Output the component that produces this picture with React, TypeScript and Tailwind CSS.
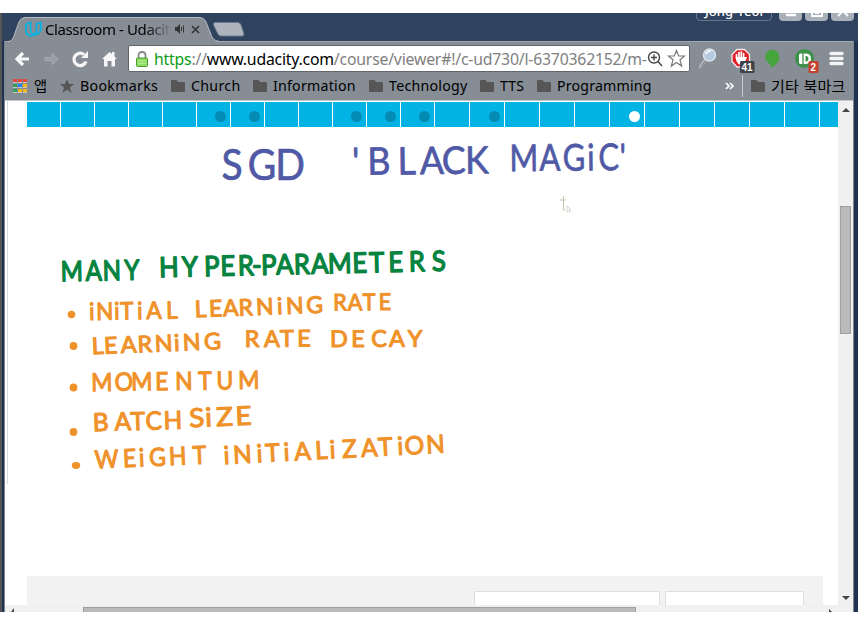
import React from "react";

const UI = "font-['Noto_Sans','Noto_Sans_CJK_KR',sans-serif]";

/* One handwritten word: every letter is centred on its own x, sx sets the letter width. */
type Word = { t: string; xs: number[]; y: number; size: number; sx: number; rot: number };

const blue: Word[] = [
  { t: "SGD", xs: [232, 262, 290], y: 180, size: 42, sx: 0.93, rot: 0 },
  { t: "'BLACK", xs: [356, 379, 407, 432, 454, 477], y: 175, size: 38, sx: 0.94, rot: -0.7 },
  { t: "MAGiC'", xs: [524, 550, 574, 591, 609, 623], y: 171, size: 37, sx: 0.84, rot: -0.5 },
];
const green: Word[] = [
  { t: "MANY", xs: [72, 94, 112, 132], y: 281, size: 28, sx: 0.86, rot: -1 },
  {
    t: "HYPER-PARAMETERS",
    xs: [169, 190, 212, 228, 246, 257, 269, 285, 302, 320, 340, 360, 377, 396, 417, 439],
    y: 277, size: 28, sx: 0.92, rot: -1.3,
  },
];
const orange: Word[] = [
  { t: "iNiTiAL", xs: [92, 105, 117, 127, 140, 154, 172], y: 320, size: 24, sx: 0.94, rot: -1 },
  { t: "LEARNiNG", xs: [201, 216, 231, 246, 265, 280, 295, 315], y: 317, size: 23, sx: 1, rot: -2 },
  { t: "RATE", xs: [340, 355, 369, 385], y: 310.5, size: 23, sx: 0.94, rot: -0.7 },
  { t: "LEARNiNG", xs: [98, 111, 129, 145, 164, 177, 192, 213], y: 354, size: 23, sx: 1.02, rot: -2.3 },
  { t: "RATE", xs: [252, 272, 287, 304], y: 347, size: 23, sx: 1.02, rot: -0.5 },
  { t: "DECAY", xs: [339, 358, 379, 397, 415], y: 347, size: 23, sx: 1.02, rot: -0.3 },
  { t: "MOMENTUM", xs: [102, 124, 142, 162, 184, 205, 225, 249], y: 391, size: 25, sx: 0.92, rot: -0.8 },
  { t: "BATCH", xs: [101, 123, 138, 154, 173], y: 431, size: 25, sx: 0.98, rot: -1.6 },
  { t: "SiZE", xs: [197, 209, 225, 244], y: 427, size: 26, sx: 1.08, rot: -2.5 },
  { t: "WEiGHT", xs: [107, 130, 142, 158, 178, 200], y: 468, size: 25, sx: 0.92, rot: -2.5 },
  {
    t: "iNiTiALiZATiON",
    xs: [227, 243, 260, 273, 287, 303, 322, 333, 350, 370, 386, 401, 415, 436],
    y: 464, size: 25, sx: 0.98, rot: -3,
  },
];

function Ink({ words, color, thick }: { words: Word[]; color: string; thick: number }) {
  return (
    <g fill={color} stroke={color} strokeWidth={thick} strokeLinejoin="round" textAnchor="middle">
      {words.map((w, i) => (
        <text
          key={i}
          transform={`translate(${w.xs[0]} ${w.y}) rotate(${w.rot}) scale(${w.sx} 1)`}
          x={w.xs.map((x) => ((x - w.xs[0]) / w.sx).toFixed(1)).join(" ")}
          fontSize={w.size}
        >
          {w.t}
        </text>
      ))}
    </g>
  );
}

function Folder() {
  return (
    <svg width="14" height="12" viewBox="0 0 14 12" className="shrink-0">
      <path d="M0 1q0-1 1-1h4.5l1.5 2h6q1 0 1 1v8q0 1-1 1H1q-1 0-1-1z" fill="#565656" />
    </svg>
  );
}

const folders = [
  { t: "Church", w: "w-[82px]", s: "tracking-[0.3px]" },
  { t: "Information", w: "w-[116px]", s: "tracking-[0.22px]" },
  { t: "Technology", w: "w-[111px]", s: "tracking-[0.24px]" },
  { t: "TTS", w: "w-[57px]", s: "tracking-[0.1px]" },
  { t: "Programming", w: "w-[188px]", s: "tracking-[0.18px]" },
];

function TabStrip() {
  return (
    <div className="relative h-[28px] shrink-0">
      <svg className="absolute left-0 top-0" width="260" height="29">
        <path d="M5 29C12 29 13 26 15 20L19 9Q21 4.500 25 4.500H199Q204 4.500 206 9L212 24Q214 28.500 219 29Z" fill="#868d95" />
        <path d="M8 28.500C12 28 13 26 15 20L19 9Q21 4.500 25 4.500H199Q204 4.500 206 9L212 24Q214 28 219 28.500" fill="none" stroke="#b7bdc5" />
        <path d="M215 9.500H238Q240 9.500 241 12L244 21Q244 23 242 23H221Q219 23 218 21L213.500 12Q213 9.500 215 9.500Z" fill="#adb4bd" stroke="#6d7a8d" />
      </svg>
      <div className="relative flex h-[32px] items-center pl-[25px]">
        <svg width="17" height="16" viewBox="0 0 17 16" fill="none" stroke="#02b3e4" strokeWidth="1.800">
          <path d="M1 3.500L5.500 1.500V8Q5.500 13.500 10 13.500T15.800 8V1.500L11.500 3V9Q11 14.500 6 14.800Q1 14.500 1 9Z" />
        </svg>
        <div className={`ml-[3px] w-[126px] whitespace-nowrap bg-gradient-to-r from-black from-75% to-[#868d95] bg-clip-text text-[15px] leading-[24px] tracking-[-0.4px] text-transparent ${UI}`}>
          Classroom - Udacit
        </div>
        <svg className="ml-[4px]" width="11" height="10" viewBox="0 0 11 10">
          <path d="M0 3H2L5 0V10L2 7H0Z" fill="#333" />
          <path d="M6.500 3V7M8.500 1.500V8.500" stroke="#333" />
        </svg>
        <svg className="ml-[5px]" width="9" height="9" viewBox="0 0 9 9">
          <path d="M1 1L8 8M8 1L1 8" stroke="#333" strokeWidth="1.600" />
        </svg>
      </div>
      <div className="absolute right-[4px] top-[-13px] flex items-end">
        <div className={`mr-[7px] flex h-[21px] w-[76px] items-end justify-center rounded border border-[#66758c] text-[13px] font-medium leading-[17px] text-white ${UI}`}>Jong-Yeol</div>
        {[0, 1, 2].map((n) => (
          <div key={n} className={`flex h-[20px] w-[23px] items-end justify-center rounded-b-sm bg-[#a9b0b9] pb-[4px] ${n < 2 ? "mr-[3px]" : ""}`}>
            <svg width="12" height="9" viewBox="0 0 12 9" fill="none" stroke="white" strokeWidth="1.800">
              {n === 0 && <path d="M1 7H11" strokeWidth="2.500" />}
              {n === 1 && <path d="M1 0V8H11V0M4 5H8" />}
              {n === 2 && <path d="M1 8L6 3L11 8M3 0L6 3L9 0" />}
            </svg>
          </div>
        ))}
      </div>
    </div>
  );
}

function NavBar() {
  return (
    <div className="flex h-[33px] shrink-0 items-center border-t border-[#a3aab2] pl-[10px] pt-[1px]">
      <svg width="102" height="20" viewBox="0 0 102 20" fill="none">
        <path d="M14 10H2M8 4L2 10L8 16" stroke="#f7f7f7" strokeWidth="3.200" />
        <path d="M30 8.500H37V4.500L43.500 10L37 15.500V11.500H30Z" stroke="#a4aab2" fill="#989ea6" />
        <path d="M71 12.500A6.200 6.200 0 1 1 69 5.500" stroke="#f7f7f7" strokeWidth="3.300" />
        <path d="M73 2V9H66Z" fill="#f7f7f7" />
        <path d="M87 10L94.500 3L97 5V3H99.500V7.500L102 10H100V17.500H96.500V12H92.500V17.500H89V10Z" fill="#f7f7f7" />
      </svg>
      <div className="ml-[11px] flex h-[27px] w-[562px] items-center rounded-[2px] border border-[#60666d] bg-white pl-[7px]">
        <svg width="12" height="16" viewBox="0 0 12 16">
          <path d="M2.500 8V4.500Q2.500 1 6 1T9.500 4.500V8" fill="none" stroke="#8a8a8a" strokeWidth="1.800" />
          <rect x="0.500" y="7" width="11" height="8.500" rx="1" fill="#8fdc65" stroke="#4b9c2e" />
          <path d="M2 10H10M2 12.500H10" stroke="#b5f08f" />
        </svg>
        <div className={`ml-[6px] w-[494px] whitespace-nowrap text-[15.800px] leading-[24px] tracking-[-0.205px] text-[#7f7f7f] ${UI}`}>
          <span className="text-[#0b9c14]">https</span>://<span className="text-black">www.udacity.com</span>/course/viewer#!/c-ud730/l-6370362152/m-
        </div>
        <svg className="-ml-[1px]" width="17" height="16" viewBox="0 0 17 16" fill="none" stroke="#444" strokeWidth="1.400">
          <circle cx="7" cy="6.500" r="5.500" />
          <path d="M4 6.500H10M7 3.500V9.500M11 10.500L15 15" />
        </svg>
        <svg className="ml-[3px]" width="19" height="19" viewBox="0 0 19 19">
          <path d="M9.500 1.500L11.700 7H17.500L13 10.800L14.700 17L9.500 13.500L4.300 17L6 10.800L1.500 7H7.300Z" fill="white" stroke="#777" strokeWidth="1.200" />
        </svg>
      </div>
      <svg className="ml-[9px]" width="150" height="28" viewBox="699 45 150 28">
        <path d="M700 67L707 58" stroke="#b4b7bb" strokeWidth="3" strokeLinecap="round" />
        <path d="M700.500 67.500L707.500 58.500" stroke="#75797d" />
        <circle cx="709.500" cy="55" r="6" fill="#b5c9df" stroke="#dbe3ed" strokeWidth="1.500" />
        <path d="M706 54Q707 50.500 711 51" stroke="#eef6ff" fill="none" strokeWidth="2" />
        <path d="M737 49.500H744.500L749.500 54.500V61.500L744.500 67H737L732 61.500V54.500Z" fill="#df2028" stroke="#f4e8e8" strokeWidth="1.300" />
        <path d="M736.500 58V54.500M739 58V52.500M741.300 58V52M743.600 58V53.500" stroke="white" strokeWidth="1.700" strokeLinecap="round" />
        <path d="M735.700 57H744.500L747 57Q745 64 740.500 65Q736 63.500 735.700 57Z" fill="white" />
        <rect x="740" y="61" width="14.500" height="12" rx="1.500" fill="#3f4347" />
        <text x="741.500" y="71" fill="white" className="font-['Liberation_Sans',sans-serif] text-[10px] font-bold">41</text>
        <path d="M772.500 50C781 50 781 61 776 64L772 68L770 64C763 60 764 50 772.500 50Z" fill="#45a53c" />
        <circle cx="804.500" cy="58.500" r="9.500" fill="#3e9148" />
        <path d="M799 55Q799 53.500 800.500 53.500H806Q811 54 811 58.700T806 64H800.500Q799 64 799 62.500Z" fill="white" />
        <path d="M803 53V64.500" stroke="#3e9148" strokeWidth="1.300" />
        <path d="M805.500 56H806.500Q808.500 56.500 808.500 58.700T806.500 61.500H805.500Z" fill="#3e9148" />
        <rect x="808.500" y="61" width="10" height="12" rx="1.500" fill="#c5402d" />
        <text x="810.500" y="71" fill="white" className="font-['Liberation_Sans',sans-serif] text-[10px] font-bold">2</text>
        <path d="M831 53.500H842M831 58.500H842M831 63.500H842" stroke="#f4f4f4" strokeWidth="3.400" strokeLinecap="round" />
      </svg>
    </div>
  );
}

function BookmarkBar() {
  const apps = ["bg-[#ec4434]", "bg-[#ec4434]", "bg-[#ec4434]", "bg-[#2d9d58]", "bg-[#2980ea]", "bg-[#f4b714]", "bg-[#2d9d58]", "bg-[#f4b714]", "bg-[#f4b714]"];
  return (
    <div className={`flex h-[27px] shrink-0 items-center whitespace-nowrap border-b border-[#c5c7ca] pb-[3px] pl-[8px] text-[14.200px] leading-[22px] text-black ${UI}`}>
      <div className="grid shrink-0 grid-cols-3 gap-px">
        {apps.map((c, i) => <span key={i} className={`h-[4px] w-[4px] border-b border-[#c8cacb] ${c}`} />)}
      </div>
      <span className="ml-[7px] w-[20px] shrink-0">앱</span>
      <svg className="ml-[6px] shrink-0" width="14" height="14" viewBox="0 0 14 14">
        <path d="M7 0L9 5H14L10 8.500L11.500 14L7 10.500L2.500 14L4 8.500L0 5H5Z" fill="#565656" />
      </svg>
      <span className="ml-[6px] w-[91px] shrink-0 tracking-[0.300px]">Bookmarks</span>
      {folders.map((f) => (
        <span key={f.t} className={`flex shrink-0 items-center gap-[6px] ${f.w} ${f.s}`}>
          <Folder />
          {f.t}
        </span>
      ))}
      <svg width="9" height="8" viewBox="0 0 9 8" className="shrink-0"><path d="M1 1L4 4L1 7M5 1L8 4L5 7" fill="none" stroke="white" strokeWidth="1.700" /></svg>
      <span className="ml-[8px] mr-[8px] h-[22px] w-px bg-[#c7cbd0]" />
      <Folder />
      <span className="ml-[6px] text-[15px] tracking-[0.300px]">기타 북마크</span>
    </div>
  );
}

function LessonProgress() {
  const dots = [5, 6, 9, 10, 11, 13];
  return (
    <div className="flex h-[25px] w-[811px] gap-px">
      {Array.from({ length: 24 }, (_, i) => (
        <div key={i} className={`flex shrink-0 items-center justify-end bg-[#02b3e4] pr-[4px] pt-[3px] ${i < 12 ? "w-[33px]" : i < 23 ? "w-[34px]" : "w-[18px]"}`}>
          {dots.includes(i) && <i className="h-[11px] w-[11px] rounded-full bg-[#028bb3]" />}
          {i === 17 && <i className="h-[11px] w-[11px] rounded-full bg-white" />}
        </div>
      ))}
    </div>
  );
}

function Whiteboard() {
  return (
    <svg className="block h-[449px] w-[811px]" viewBox="27 127 811 449" fontFamily="Lato, sans-serif">
      <Ink words={blue} color="#5059a5" thick={0.7} />
      <Ink words={green} color="#078340" thick={1.4} />
      <Ink words={orange} color="#ef922a" thick={1.1} />
      <g fill="#ef922a">
        <circle cx="71.500" cy="314.500" r="3.800" />
        <circle cx="73.500" cy="346" r="3.900" />
        <circle cx="73.500" cy="387.500" r="3.900" />
        <circle cx="73.500" cy="432" r="3.900" />
        <ellipse cx="76" cy="465.500" rx="4.200" ry="3.400" />
      </g>
      <path d="M559.500 200H566M563.500 196V210H565" fill="none" stroke="#c5c2b2" />
      <path d="M567 206V212L569 210.500L570.500 213M567 206L571 210H569" fill="none" stroke="#d4d4c8" />
    </svg>
  );
}

export default function App() {
  return (
    <div className="h-[625px] w-[858px] bg-white py-[13px]">
      <div className="flex h-[599px] flex-col overflow-hidden border-l-2 border-[#555657] bg-[#30435e]">
        <div className="-ml-[2px] h-[28px]"><TabStrip /></div>
        <div className="flex h-[571px]">
          <div className="w-[2px] shrink-0 bg-[#1f3350]" />
          <div className="flex w-[850px] shrink-0 flex-col border-x border-[#7c848d] bg-[#868d95]">
            <NavBar />
            <BookmarkBar />
            <div className="flex h-[504px] w-[848px] bg-white">
              <div className="flex w-[833px] shrink-0">
                <div className="h-[383px] w-[22px] shrink-0 pl-[2px]"><div className="h-full w-px bg-[#d9d9d9]" /></div>
                <div className="w-[811px] pt-px">
                  <LessonProgress />
                  <Whiteboard />
                  <div className="flex h-[29px] w-[796px] items-end justify-end gap-[5px] bg-[#f2f2f2] pr-[19px]">
                    <div className="h-[14px] w-[186px] rounded-t-[2px] border border-b-0 border-[#dbdfe3] bg-white" />
                    <div className="h-[14px] w-[139px] rounded-t-[2px] border border-b-0 border-[#dbdfe3] bg-white" />
                  </div>
                </div>
              </div>
              <div className="flex w-[15px] shrink-0 flex-col items-center bg-[#f0f0f0]">
                <i className="mt-[7px] border-x-4 border-b-4 border-x-transparent border-b-[#454545]" />
                <div className="mt-[94px] h-[128px] w-[11px] border border-[#9f9f9f] bg-[#bababa]" />
                <i className="mt-[262px] border-x-4 border-t-4 border-x-transparent border-t-[#454545]" />
              </div>
            </div>
            <div className="flex h-[7px] shrink-0 items-end bg-[#f0f0f0]">
              <i className="ml-[6px] h-[4px] w-[3px] bg-[#454545] [clip-path:polygon(100%_0,100%_100%,0_100%)]" />
              <div className="ml-[69px] h-[5px] w-[553px] border border-b-0 border-[#9f9f9f] bg-[#bababa]" />
              <i className="ml-[193px] h-[3px] w-[3px] bg-[#454545] [clip-path:polygon(0_0,100%_100%,0_100%)]" />
            </div>
          </div>
          <div className="grow bg-[#1f3350]" />
        </div>
      </div>
    </div>
  );
}
